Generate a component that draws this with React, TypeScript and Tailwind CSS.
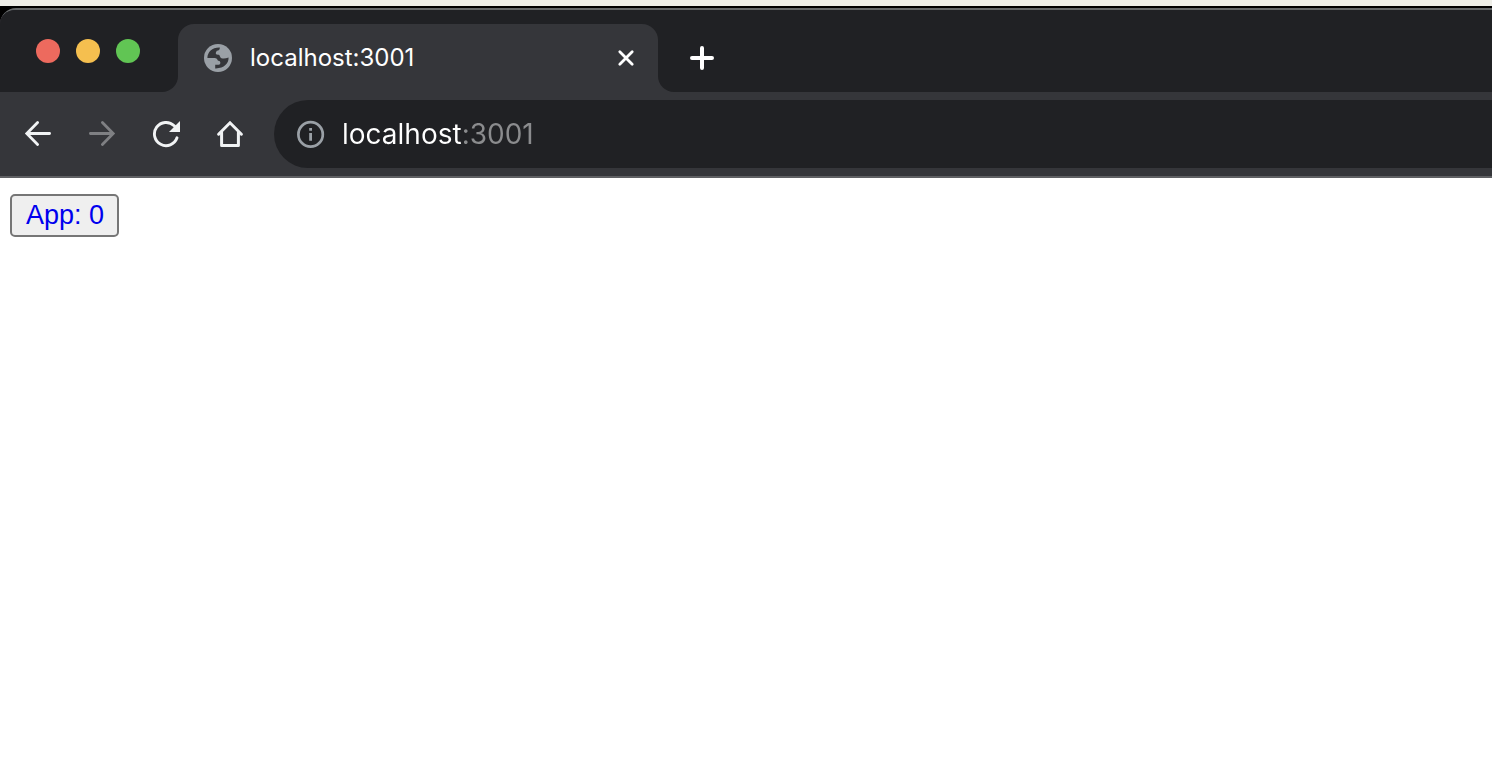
import { useState } from "react";

function GlobeIcon() {
  return (
    <svg viewBox="0 0 28 28" className="size-7 shrink-0" aria-hidden="true">
      <circle cx="14" cy="14" r="14" fill="#9aa0a6" />
      <path
        fill="#35363a"
        d="M3.4 13.9C3.5 7.8 8.4 3.1 15.8 3.4C15.9 5.6 15.1 6.4 12.8 6.7C12.3 8 11.7 8.4 11.8 9.4C12 10.5 13.6 10.6 14.9 10.7C15.8 10.8 15.9 13.6 17.4 14.2C19.4 14.9 21.6 14.6 24.6 13.6C24.7 19.6 20 24.7 11.2 24.4V20.7H14.6C16.2 20.6 16.6 19.2 16.2 17.9C15.8 16.8 14.8 16.9 14 16.8C13.4 14.9 12.5 14 10.6 13.9Z"
      />
    </svg>
  );
}

function CloseIcon() {
  return (
    <svg viewBox="0 0 18 18" className="size-[18px]" fill="none" stroke="#fff" strokeWidth="2.8" strokeLinecap="round" aria-hidden="true">
      <path d="M2.8 2.8 15.2 15.2M15.2 2.8 2.8 15.2" />
    </svg>
  );
}

function PlusIcon() {
  return (
    <svg viewBox="0 0 24 24" className="size-6" fill="none" stroke="#fff" strokeWidth="4" strokeLinecap="round" aria-hidden="true">
      <path d="M12 2V22M2 12H22" />
    </svg>
  );
}

function ArrowIcon({ forward = false }: { forward?: boolean }) {
  return (
    <svg
      viewBox="0 0 28 28"
      className="size-7"
      fill="none"
      stroke={forward ? "#7f8083" : "#f1f3f4"}
      strokeWidth="2.8"
      strokeLinecap="round"
      strokeLinejoin="miter"
      aria-hidden="true"
    >
      <path d={forward ? "M2.4 13.5H25M14.4 2.6 25.2 13.5 14.4 24.4" : "M25.6 13.5H3M13.6 2.6 2.8 13.5 13.6 24.4"} />
    </svg>
  );
}

function ReloadIcon() {
  return (
    <svg viewBox="0 0 28 28" className="size-7" fill="none" aria-hidden="true">
      <path d="M25 17.8A11.6 11.6 0 1 1 22.2 5.8L24 7.6" stroke="#f1f3f4" strokeWidth="2.9" strokeLinecap="round" />
      <path d="M28 1V12H17Z" fill="#f1f3f4" />
    </svg>
  );
}

function HomeIcon() {
  return (
    <svg viewBox="0 0 28 28" className="size-7" fill="none" stroke="#f1f3f4" strokeWidth="3" strokeLinecap="round" aria-hidden="true">
      <path d="M2.6 14.2 14 2.8 25.4 14.2" />
      <path d="M5.6 12.5V25.5H22.4V12.5" strokeLinejoin="round" />
    </svg>
  );
}

function InfoIcon() {
  return (
    <svg viewBox="0 0 28 28" className="size-7 shrink-0" fill="none" aria-hidden="true">
      <circle cx="13.6" cy="14.4" r="12.2" stroke="#9aa0a6" strokeWidth="2.7" />
      <path d="M12.2 8H15V10.8H12.2ZM12.2 13H15V20.8H12.2Z" fill="#9aa0a6" />
    </svg>
  );
}

function TabStrip() {
  return (
    <div className="flex bg-[#35363a]">
      <div className="flex w-[178px] shrink-0 items-center gap-4 rounded-br-2xl bg-[#202124] pl-9">
        <button aria-label="Close window" className="size-6 rounded-full bg-[#ed6a5e]" />
        <button aria-label="Minimize window" className="size-6 rounded-full bg-[#f5bf4f]" />
        <button aria-label="Zoom window" className="size-6 rounded-full bg-[#61c554]" />
      </div>
      <div className="w-[480px] bg-[#202124] pt-[14px]">
        <div className="flex h-[68px] items-center rounded-t-2xl bg-[#35363a] pr-[23px] pl-[26px]">
          <GlobeIcon />
          <span className="ml-[18px] flex-1 text-2xl text-white">localhost:3001</span>
          <button aria-label="Close tab">
            <CloseIcon />
          </button>
        </div>
      </div>
      <div className="flex flex-1 items-center rounded-bl-2xl bg-[#202124] pt-[14px] pl-8">
        <button aria-label="New tab">
          <PlusIcon />
        </button>
      </div>
    </div>
  );
}

function Toolbar() {
  const [url, setUrl] = useState("localhost:3001");
  return (
    <div className="flex items-center border-b-2 border-[#5f6063] bg-[#35363a] py-2 pl-6">
      <div className="flex items-center gap-9">
        <button aria-label="Back">
          <ArrowIcon />
        </button>
        <button aria-label="Forward" disabled>
          <ArrowIcon forward />
        </button>
        <button aria-label="Reload">
          <ReloadIcon />
        </button>
        <button aria-label="Home">
          <HomeIcon />
        </button>
      </div>
      <div className="ml-[30px] flex h-[68px] flex-1 items-center gap-[17px] rounded-l-full bg-[#202124] pl-[23px]">
        <InfoIcon />
        <input
          aria-label="Address"
          value={url}
          onChange={(e) => setUrl(e.target.value)}
          className="min-w-0 flex-1 bg-linear-to-r from-white from-[120px] to-[#8b8c8e] to-[120px] bg-clip-text text-[28px] leading-9 text-transparent caret-white outline-none"
        />
      </div>
    </div>
  );
}

export default function App() {
  const [count, setCount] = useState(0);
  return (
    <div className="min-h-screen bg-white font-['Inter',sans-serif]">
      <header className="border-t-[6px] border-[#eeeee8] bg-black pt-0.5">
        <div className="overflow-hidden rounded-tl-[16px] border-t-2 border-[#65686a] bg-[#202124]">
          <TabStrip />
          <Toolbar />
        </div>
      </header>
      <main className="px-[10px] py-4">
        <button
          onClick={() => setCount(count + 1)}
          className="rounded-[5px] border-2 border-[#767676] bg-[#efefef] py-0.5 pr-[13px] pl-3.5 font-['Liberation_Sans',sans-serif] text-[27px] leading-[35px] text-[#0000ee]"
        >
          App: {count}
        </button>
      </main>
    </div>
  );
}
